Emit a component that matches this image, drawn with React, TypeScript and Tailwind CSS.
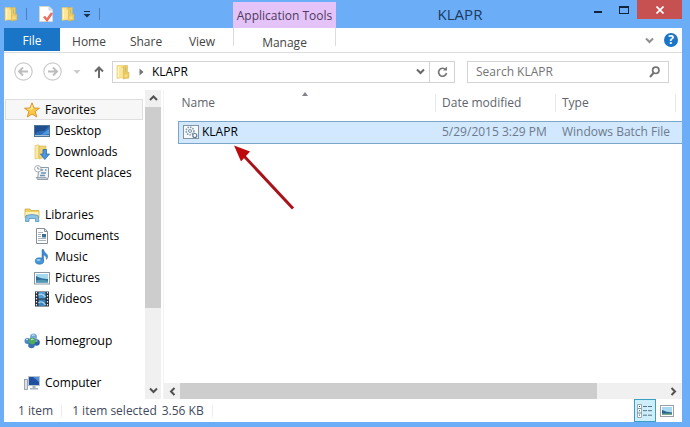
import type { ReactNode } from "react";

function FolderIcon() {
  return (
    <svg width="14" height="16" viewBox="0 0 14 16" aria-hidden="true">
      <path d="M1 1.500H6.500V13.500L1 14.500Z" fill="#fbe695" stroke="#e6c765" strokeWidth=".6" />
      <path d="M5 2.500H10.500V14H5Z" fill="#f3d675" />
      <path d="M7.500 1.500H11.500V8.500L13 8V14L7 15Z" fill="#ecca5f" stroke="#d6b24c" strokeWidth=".5" />
      <path d="M2.500 3V13M6 4V13.500" stroke="#fff6c9" />
      <path d="M9.500 3.500V7.500" stroke="#b5bd8a" />
      <path d="M8.500 10.500H11.500V13H8.500Z" fill="#f6dc81" />
    </svg>
  );
}

function PropertiesIcon() {
  return (
    <svg width="14" height="16" viewBox="0 0 14 16" aria-hidden="true">
      <path d="M.5.5H10L13.500 4V15.500H.5Z" fill="#fff" stroke="#d0d6dc" />
      <path d="M10 .5V4H13.500" fill="#e3eaf0" stroke="#b7c0c8" strokeWidth=".7" />
      <path d="M5 10.500 8 14 13 7" fill="none" stroke="#e8705f" strokeWidth="2.600" />
    </svg>
  );
}

function StarIcon() {
  return (
    <svg width="16" height="16" viewBox="0 0 16 16" aria-hidden="true">
      <path d="M8 .8 10 6 15.500 6.200 11.200 9.600 12.800 15 8 12 3.300 15 4.800 9.600.5 6.200 6 6Z" fill="#f9c846" stroke="#d98c20" strokeWidth=".9" />
      <path d="M8 2.500 9.300 7 5 8 2.500 7 6.500 6.800Z" fill="#ffeb9c" />
    </svg>
  );
}

function DesktopIcon() {
  return (
    <svg width="16" height="16" viewBox="0 0 16 16" aria-hidden="true">
      <rect x=".5" y="2.500" width="15" height="11" fill="#2e6db5" stroke="#4e7597" />
      <path d="M1 3H15L10 8Q5 7 1 11Z" fill="#204f91" />
      <path d="M7 12 15 6V11Z" fill="#4c9be3" />
      <path d="M1 12.500H15" stroke="#a9c4d6" />
    </svg>
  );
}

function DownloadsIcon() {
  return (
    <svg width="16" height="16" viewBox="0 0 16 16" aria-hidden="true">
      <path d="M1 1.500 5 .8V14L1 15Z" fill="#faeaa3" stroke="#d9bd5e" strokeWidth=".6" />
      <path d="M5 2H12V13L5 15Z" fill="#f0d474" stroke="#d5b34c" strokeWidth=".6" />
      <path d="M9 5.500H12.500V10H15.500L10.800 15.500 6.500 10H9Z" fill="#4b96df" stroke="#2b69ae" strokeWidth=".8" />
    </svg>
  );
}

function RecentIcon() {
  return (
    <svg width="16" height="16" viewBox="0 0 16 16" aria-hidden="true">
      <path d="M5 2.500H14.500V12L13 14.500H3.500Z" fill="#eef3f7" stroke="#8d99a4" />
      <path d="M7 5H9M7 8H12M6 10.500H11M11 5H12.500" stroke="#6c91b5" strokeWidth="1.300" />
      <path d="M2 12.500H12L14 14.500H4Z" fill="#c8ced4" stroke="#8d99a4" strokeWidth=".8" />
      <circle cx="3.800" cy="3.800" r="3.200" fill="#fff" stroke="#a4adb5" />
      <path d="M3.800 1.800V4H5.500" fill="none" stroke="#6d7780" strokeWidth=".8" />
    </svg>
  );
}

function LibrariesIcon() {
  return (
    <svg width="16" height="16" viewBox="0 0 16 16" aria-hidden="true">
      <path d="M1 2H6L7 3.500H15V11H1Z" fill="#f0cf67" stroke="#cfac48" strokeWidth=".8" />
      <path d="M1.500 5H14.500V9H1.500Z" fill="#fdf2b6" />
      <path d="M2 8.500Q8 6.500 14 8.500L15 14.500H11.500V11.500H5V14.500H1.500Z" fill="#8cc4e8" stroke="#5695bf" strokeWidth=".8" />
    </svg>
  );
}

function DocumentIcon() {
  return (
    <svg width="16" height="16" viewBox="0 0 16 16" aria-hidden="true">
      <path d="M2.500.5H10.500L13.500 3.500V15.500H2.500Z" fill="#fff" stroke="#87909a" />
      <path d="M10.500.5V3.500H13.500" fill="none" stroke="#87909a" />
      <path d="M4 4.500H9M4 6.500H7M4 8.500H7M4 10.500H12M4 12.500H12" stroke="#a7b2bd" />
      <rect x="8" y="6" width="4" height="3.500" fill="#3c6f94" />
    </svg>
  );
}

function MusicIcon() {
  return (
    <svg width="16" height="16" viewBox="0 0 16 16" aria-hidden="true">
      <path d="M8 .5H9.500Q9.800 3 13 5.500Q14.500 8 12.500 10.500Q13 7 9.500 6V12H8Z" fill="#3a8bd0" stroke="#2c6ca9" strokeWidth=".5" />
      <ellipse cx="5.500" cy="12" rx="4.200" ry="3.200" fill="#4397db" stroke="#2b6aa6" strokeWidth=".6" />
      <ellipse cx="4.500" cy="11" rx="2" ry="1" fill="#9bcdf2" />
    </svg>
  );
}

function PictureIcon() {
  return (
    <svg width="16" height="16" viewBox="0 0 16 16" aria-hidden="true">
      <rect x=".5" y="2.500" width="15" height="11.500" fill="#fff" stroke="#8b98a4" />
      <rect x="2" y="4" width="12" height="8.500" fill="#a8d8ee" />
      <path d="M2 6Q7 9 14 9V12.500H2Z" fill="#2f6f9b" />
      <path d="M2 10.500Q7 9 14 11V12.500H2Z" fill="#5499b4" />
    </svg>
  );
}

function VideoIcon() {
  return (
    <svg width="16" height="16" viewBox="0 0 16 16" aria-hidden="true">
      <rect x="1" y=".5" width="14" height="15" fill="#27303a" />
      <path d="M2.500 1V15M13.500 1V15" stroke="#e8edf2" strokeWidth="1.200" strokeDasharray="1.500 1.500" />
      <rect x="4.500" y="1" width="7" height="6.500" fill="#539bd3" />
      <rect x="4.500" y="8.500" width="7" height="6.500" fill="#3f83bd" />
      <path d="M4.500 4Q8 1.500 11.500 6M4.500 12Q8 9 11.500 14" fill="none" stroke="#a9d6f2" strokeWidth="1.300" />
    </svg>
  );
}

function HomegroupIcon() {
  return (
    <svg width="16" height="16" viewBox="0 0 16 16" aria-hidden="true">
      <circle cx="9.500" cy="4" r="3.500" fill="#77a9d6" />
      <circle cx="3.500" cy="8" r="3" fill="#4c88c3" />
      <circle cx="12.500" cy="9.500" r="3.300" fill="#2d62a4" />
      <circle cx="7.500" cy="12" r="3.300" fill="#3a73b4" />
      <circle cx="8.300" cy="8" r="3.200" fill="#4fae56" />
      <path d="M7 7Q8 5.500 9.500 6.500M8 2.500Q9 1.500 10.500 2.300M2 7Q3 6 4 6.500M11.500 8H13.500" fill="none" stroke="#d5f0ee" />
    </svg>
  );
}

function ComputerIcon() {
  return (
    <svg width="16" height="16" viewBox="0 0 16 16" aria-hidden="true">
      <rect x=".5" y="4.500" width="3" height="10" fill="#dce2e8" stroke="#8995a1" strokeWidth=".8" />
      <rect x="4.500" y="1.500" width="11" height="9" fill="#214e9f" stroke="#b8c3ce" />
      <path d="M9 2H15V7Z" fill="#4f8fda" />
      <path d="M8.500 11H11.500V13H14V14.500H6V13H8.500Z" fill="#a7b2be" />
    </svg>
  );
}

function BatchIcon() {
  return (
    <svg width="16" height="16" viewBox="0 0 16 16" aria-hidden="true">
      <rect x=".5" y="1.500" width="15" height="13" fill="#f6fafd" stroke="#8293a3" />
      <circle cx="7" cy="7" r="3.800" fill="none" stroke="#8297a8" strokeWidth="1.600" strokeDasharray="1.500 1" />
      <circle cx="7" cy="7" r="1.500" fill="none" stroke="#7890a3" />
      <circle cx="11.800" cy="11.500" r="2" fill="#fff" stroke="#627c92" strokeWidth="1.200" />
    </svg>
  );
}

function Chevron({ className, d }: { className: string; d: string }) {
  return (
    <svg width="9" height="9" viewBox="0 0 9 9" className={className} aria-hidden="true">
      <path d={d} fill="none" stroke="currentColor" strokeWidth="2" />
    </svg>
  );
}

const DOWN = "M1 2.500 4.500 6 8 2.500";
const UP = "M1 6 4.500 2.500 8 6";
const LEFT = "M6.500 1 3 4.500 6.500 8";
const RIGHT = "M2.500 1 6 4.500 2.500 8";

type NavItem = { label: string; icon: ReactNode };

const groups: { head: NavItem; items: NavItem[] }[] = [
  {
    head: { label: "Favorites", icon: <StarIcon /> },
    items: [
      { label: "Desktop", icon: <DesktopIcon /> },
      { label: "Downloads", icon: <DownloadsIcon /> },
      { label: "Recent places", icon: <RecentIcon /> },
    ],
  },
  {
    head: { label: "Libraries", icon: <LibrariesIcon /> },
    items: [
      { label: "Documents", icon: <DocumentIcon /> },
      { label: "Music", icon: <MusicIcon /> },
      { label: "Pictures", icon: <PictureIcon /> },
      { label: "Videos", icon: <VideoIcon /> },
    ],
  },
  { head: { label: "Homegroup", icon: <HomegroupIcon /> }, items: [] },
  { head: { label: "Computer", icon: <ComputerIcon /> }, items: [] },
];

function TitleBar() {
  return (
    <header className="flex h-7 items-start pr-2">
      <div className="flex h-7 w-[233px] shrink-0 items-center gap-2 pl-1">
        <FolderIcon />
        <span className="h-3 w-px bg-[#4c7fbd]" />
        <button aria-label="Properties" className="ml-1">
          <PropertiesIcon />
        </button>
        <button aria-label="New folder">
          <FolderIcon />
        </button>
        <button aria-label="Customize toolbar">
          <svg width="8" height="7" viewBox="0 0 8 7">
            <path d="M1 .5H7" stroke="#16304f" />
            <path d="M.5 3H7.500L4 6.500Z" fill="#16304f" />
          </svg>
        </button>
        <span className="h-3 w-px bg-[#4c7fbd]" />
      </div>
      <div className="mt-[2px] flex h-[26px] w-[103px] shrink-0 items-center justify-center bg-[#e4c3f8] pt-[2px] text-[12px] whitespace-nowrap text-[#4d3a5c]">
        Application Tools
      </div>
      <h1 className="flex-1 pt-1 text-center text-[15px] leading-5 text-[#1d3a5f]">KLAPR</h1>
      <div className="flex shrink-0">
        <button aria-label="Minimize" className="flex h-[19px] w-[27px] items-center justify-center">
          <span className="mt-1 h-[2px] w-2 bg-[#10243d]" />
        </button>
        <button aria-label="Maximize" className="flex h-[19px] w-[26px] items-center justify-center">
          <span className="h-2 w-[10px] border border-t-2 border-[#10243d]" />
        </button>
        <button aria-label="Close" className="flex h-[19px] w-[45px] items-center justify-center bg-[#c75050]">
          <svg width="8" height="8" viewBox="0 0 8 8">
            <path d="M.5.5 7.500 7.500M7.500.5.5 7.500" stroke="#fff" strokeWidth="1.700" />
          </svg>
        </button>
      </div>
    </header>
  );
}

function Ribbon() {
  return (
    <nav className="flex h-[25px] items-stretch border-b border-[#dcdddf] text-[12px] text-[#444]">
      <button className="mb-px w-14 bg-[#1b75c6] pt-[2px] text-white">File</button>
      <button className="w-[58px] pt-[3px]">Home</button>
      <button className="w-14 pt-[3px]">Share</button>
      <button className="w-14 pt-[3px]">View</button>
      <button className="mb-[6px] ml-[3px] w-[103px] border-x border-[#dcdcdc] pt-[6px]">Manage</button>
      <div className="ml-auto flex items-center gap-[10px] pr-1">
        <button aria-label="Expand ribbon">
          <Chevron d={DOWN} className="text-[#8f8f8f]" />
        </button>
        <button aria-label="Help" className="size-[14px] rounded-full bg-[#1b75c6] text-[12px] leading-[14px] font-bold text-white">
          ?
        </button>
      </div>
    </nav>
  );
}

function RoundArrow({ label, d }: { label: string; d: string }) {
  return (
    <button aria-label={label}>
      <svg width="19" height="19" viewBox="0 0 19 19">
        <circle cx="9.500" cy="9.500" r="8.700" fill="none" stroke="#cbcbcb" strokeWidth="1.200" />
        <path d={d} fill="none" stroke="#bcbcbc" strokeWidth="1.900" />
      </svg>
    </button>
  );
}

function AddressBar() {
  return (
    <div className="flex h-[37px] items-center pr-[13px] pl-[10px] text-[12px]">
      <RoundArrow label="Back" d="M14 9.500H5.500M9 5.500 5 9.500 9 13.500" />
      <span className="w-[10px]" />
      <RoundArrow label="Forward" d="M5 9.500H13.500M10 5.500 14 9.500 10 13.500" />
      <button aria-label="Recent locations" className="ml-[11px]">
        <svg width="8" height="4" viewBox="0 0 8 4">
          <path d="M.5 0H7.500L4 4Z" fill="#ccc" />
        </svg>
      </button>
      <button aria-label="Up" className="ml-[13px]">
        <svg width="10" height="12" viewBox="0 0 10 12">
          <path d="M5 12V2M1 5.500 5 1.500 9 5.500" fill="none" stroke="#6b6b6b" strokeWidth="2" />
        </svg>
      </button>
      <div className="ml-2 flex h-[22px] flex-1 items-center border border-[#d3d3d3]">
        <span className="ml-[3px]">
          <FolderIcon />
        </span>
        <svg width="5" height="8" viewBox="0 0 5 8" className="ml-[9px]" aria-hidden="true">
          <path d="M.5.5V7.500L4.500 4Z" fill="#747474" />
        </svg>
        <span className="ml-2 flex-1 text-black">KLAPR</span>
        <button aria-label="Previous locations" className="mr-1">
          <Chevron d={DOWN} className="text-[#666]" />
        </button>
        <button aria-label="Refresh" className="flex h-full w-[25px] items-center justify-center border-l border-[#d3d3d3]">
          <svg width="11" height="12" viewBox="0 0 11 12">
            <path d="M8.500 3.500A4 4 0 1 0 9.500 7" fill="none" stroke="#777" strokeWidth="1.700" />
            <path d="M6 4.500H10V.5Z" fill="#777" />
          </svg>
        </button>
      </div>
      <label className="ml-3 flex h-[22px] w-[202px] items-center border border-[#d3d3d3] px-2">
        <input aria-label="Search KLAPR" placeholder="Search KLAPR" className="min-w-0 flex-1 outline-none placeholder:text-[#757575]" />
        <svg width="11" height="12" viewBox="0 0 11 12" aria-hidden="true">
          <circle cx="6.800" cy="4.300" r="3.200" fill="none" stroke="#747474" strokeWidth="1.700" />
          <path d="M4.500 7 1 11" stroke="#747474" strokeWidth="2" />
        </svg>
      </label>
    </div>
  );
}

function Sidebar() {
  return (
    <aside className="flex w-[157px] shrink-0">
      <div className="flex flex-1 flex-col gap-[21px] pt-[9px] pl-[1px] text-[12px] text-black">
        {groups.map(({ head, items }) => (
          <ul key={head.label}>
            <li>
              <a
                href="#"
                className={
                  head.label === "Favorites"
                    ? "mr-[2px] flex h-[21px] items-center gap-[5px] border border-[#dedede] bg-[#f7f7f7] pl-[18px]"
                    : "flex h-[21px] items-center gap-[5px] pl-[19px]"
                }
              >
                {head.icon}
                {head.label}
              </a>
            </li>
            {items.map((item) => (
              <li key={item.label}>
                <a href="#" className="flex h-[21px] items-center gap-[5px] pl-[29px] whitespace-nowrap">
                  {item.icon}
                  {item.label}
                </a>
              </li>
            ))}
          </ul>
        ))}
      </div>
      <div className="flex w-4 flex-col bg-[#f0f0f0]">
        <button aria-label="Scroll up" className="flex h-[17px] items-center justify-center">
          <Chevron d={UP} className="text-[#505050]" />
        </button>
        <div className="flex-1">
          <div className="h-[73%] bg-[#cdcdcd]" />
        </div>
        <button aria-label="Scroll down" className="flex h-[17px] items-center justify-center">
          <Chevron d={DOWN} className="text-[#505050]" />
        </button>
      </div>
    </aside>
  );
}

function FileList() {
  return (
    <main className="relative flex min-w-0 flex-1 flex-col border-l border-[#f3f3f3]">
      <div className="flex-1 pl-[14px]">
        <table className="w-full table-fixed border-collapse text-left text-[12px]">
          <colgroup>
            <col />
            <col className="w-[120px]" />
            <col className="w-[120px]" />
            <col className="w-[7px]" />
          </colgroup>
          <thead>
            <tr className="h-[31px] align-top text-[#60646c]">
              <th className="pt-1 pl-[3px] font-normal">
                <span className="block h-[18px] leading-[18px]">Name</span>
              </th>
              <th className="pt-1 font-normal">
                <span className="block h-[18px] border-l border-[#e4e9f0] pl-[6px] leading-[18px]">Date modified</span>
              </th>
              <th className="pt-1 font-normal">
                <span className="block h-[18px] border-l border-[#e4e9f0] pl-[6px] leading-[18px]">Type</span>
              </th>
              <th className="pt-1">
                <span className="block h-[18px] border-l border-[#e4e9f0]" />
              </th>
            </tr>
          </thead>
          <tbody>
            <tr className="h-[22px] border border-r-0 border-[#7aa7c9] bg-[#d1e8ff] text-[#6d7a89]">
              <td className="pl-1 text-black">
                <span className="flex items-center gap-[3px]">
                  <BatchIcon />
                  KLAPR
                </span>
              </td>
              <td className="pl-[7px] whitespace-nowrap">5/29/2015 3:29 PM</td>
              <td className="pl-[7px] whitespace-nowrap" colSpan={2}>
                Windows Batch File
              </td>
            </tr>
          </tbody>
        </table>
      </div>
      <svg width="6" height="4" viewBox="0 0 6 4" className="absolute top-[2px] left-[138px]" aria-hidden="true">
        <path d="M0 4 3 0 6 4Z" fill="#808489" />
      </svg>
      <svg width="62" height="66" viewBox="0 0 62 66" className="absolute top-[55px] left-[70px]" aria-hidden="true">
        <path d="M9 10 59 63.500" stroke="#a81218" strokeWidth="3" />
        <path d="M0 .5 16 6.500 7 16.500Z" fill="#bd0a0d" />
      </svg>
      <div className="flex h-4 bg-[#f0f0f0]">
        <button aria-label="Scroll left" className="flex w-4 items-center justify-center">
          <Chevron d={LEFT} className="text-[#505050]" />
        </button>
        <div className="flex-1">
          <div className="h-full w-[86%] bg-[#cdcdcd]" />
        </div>
        <button aria-label="Scroll right" className="flex w-[17px] items-center justify-center">
          <Chevron d={RIGHT} className="text-[#505050]" />
        </button>
      </div>
    </main>
  );
}

function StatusBar() {
  return (
    <footer className="flex h-[23px] items-center pl-[14px] text-[12px] text-[#3f4a5c]">
      <span>1 item</span>
      <span className="mr-[10px] ml-2 h-3 w-px bg-[#ececec]" />
      <span>1 item selected</span>
      <span className="ml-[5px]">3.56 KB</span>
      <span className="ml-2 h-3 w-px bg-[#ececec]" />
      <div className="ml-auto flex h-full items-center">
        <button aria-label="Details view" className="flex h-full w-[22px] items-center justify-center border border-[#3c9fc4] bg-[#cdeefa]">
          <svg width="16" height="14" viewBox="0 0 16 14">
            <path d="M.5.5H4.500V4.500H.5ZM.5 4.500H4.500V9H.5ZM.5 9H4.500V13.500H.5Z" fill="#fff" stroke="#8797a3" strokeWidth=".8" />
            <path d="M2 2.500H3M2 6.700H3M2 11.200H3" stroke="#235b88" />
            <path d="M6 2.500H10M11 2.500H15M6 6.700H10M11 6.700H15M6 11.200H10M11 11.200H15" stroke="#55738a" />
          </svg>
        </button>
        <button aria-label="Thumbnail view" className="mr-2 ml-1">
          <svg width="14" height="12" viewBox="0 0 14 12">
            <rect x=".5" y=".5" width="13" height="11" fill="#fff" stroke="#99a2aa" />
            <rect x="2" y="2" width="10" height="8" fill="#a9d9f2" />
            <path d="M2 5Q6 7 12 7.500V10H2Z" fill="#286189" />
            <path d="M2 8.500H12V10H2Z" fill="#77a891" />
          </svg>
        </button>
      </div>
    </footer>
  );
}

export default function App() {
  return (
    <div className="flex min-h-screen flex-col bg-[#6badf6] font-['Open_Sans','Noto_Sans',sans-serif]">
      <TitleBar />
      <div className="mr-2 mb-[5px] ml-1 flex flex-1 flex-col bg-white">
        <Ribbon />
        <AddressBar />
        <div className="flex flex-1 gap-[2px]">
          <Sidebar />
          <FileList />
        </div>
        <StatusBar />
      </div>
    </div>
  );
}
